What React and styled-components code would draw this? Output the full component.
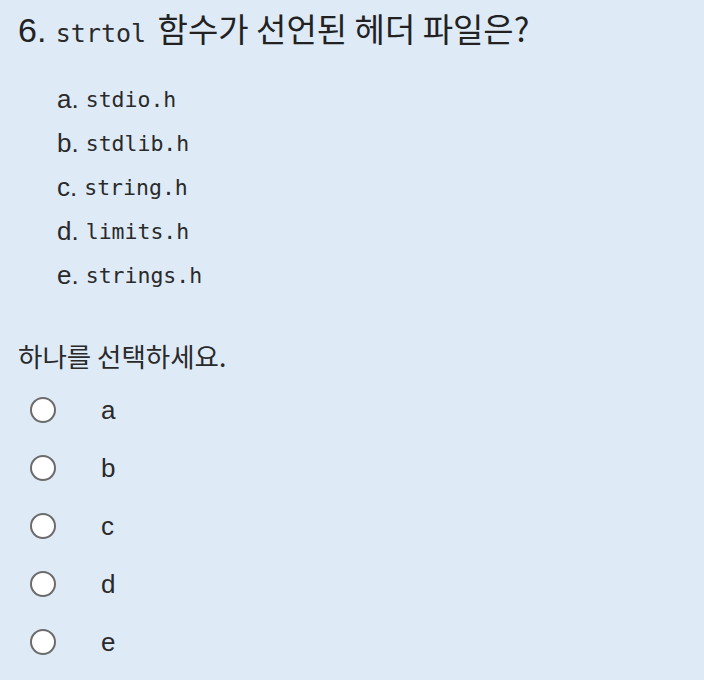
import React from "react";
import styled, { createGlobalStyle } from "styled-components";

const Global = createGlobalStyle`
  html, body { margin: 0; padding: 0; background: #deebf7; }
  body { font-family: "Liberation Sans", "Noto Sans CJK KR", sans-serif; color: #2a2a2a; }
`;

const Page = styled.div`
  padding: 6px 18px 0 18px;
  width: 704px;
  height: 680px;
  box-sizing: border-box;
  background: #deebf7;
`;

const Heading = styled.h3`
  margin: 0;
  font-weight: 400;
  font-size: 34px;
  line-height: 44px;
  color: #222;
  font-family: "Liberation Sans", "Noto Sans CJK KR", sans-serif;
  white-space: nowrap;
`;

const Code = styled.code`
  font-family: "DejaVu Sans Mono", monospace;
  font-size: ${(p) => p.$size}px;
  color: #2a2a2a;
`;

const Ko = styled.span`
  font-family: "Noto Sans CJK KR", sans-serif;
  font-size: ${(p) => p.$size}px;
  margin-left: 2px;
`;

const OptionList = styled.ol`
  list-style: none;
  margin: 21px 0 0 0;
  padding: 0 0 0 39px;
  display: flex;
  flex-direction: column;
`;

const OptionItem = styled.li`
  height: 44px;
  display: flex;
  align-items: center;
  font-size: 26px;
  color: #2a2a2a;
`;

const Letter = styled.span`
  margin-right: 7px;
`;

const Prompt = styled.div`
  margin-top: 43px;
  font-family: "Noto Sans CJK KR", sans-serif;
  font-size: 26.5px;
  line-height: 32px;
  color: #2a2a2a;
`;

const Answers = styled.div`
  display: flex;
  flex-direction: column;
  margin-top: 9px;
`;

const AnswerRow = styled.label`
  height: 58px;
  display: flex;
  align-items: center;
  padding-left: 12px;
`;

const Radio = styled.span`
  width: 26px;
  height: 26px;
  box-sizing: border-box;
  border-radius: 50%;
  border: 2px solid #6b6b6b;
  background: #fff;
  flex: none;
`;

const AnswerLabel = styled.span`
  margin-left: 45px;
  font-size: 26px;
  color: #2a2a2a;
`;

const options = [
  ["a", "stdio.h"],
  ["b", "stdlib.h"],
  ["c", "string.h"],
  ["d", "limits.h"],
  ["e", "strings.h"],
];

export default function App() {
  return (
    <Page>
      <Global />
      <Heading>
        6. <Code $size={25}>strtol</Code> <Ko $size={33}>함수가 선언된 헤더 파일은?</Ko>
      </Heading>
      <OptionList>
        {options.map(([l, c]) => (
          <OptionItem key={l}>
            <Letter>{l}.</Letter>
            <Code $size={21.5}>{c}</Code>
          </OptionItem>
        ))}
      </OptionList>
      <Prompt>하나를 선택하세요.</Prompt>
      <Answers>
        {options.map(([l]) => (
          <AnswerRow key={l}>
            <Radio />
            <AnswerLabel>{l}</AnswerLabel>
          </AnswerRow>
        ))}
      </Answers>
    </Page>
  );
}
